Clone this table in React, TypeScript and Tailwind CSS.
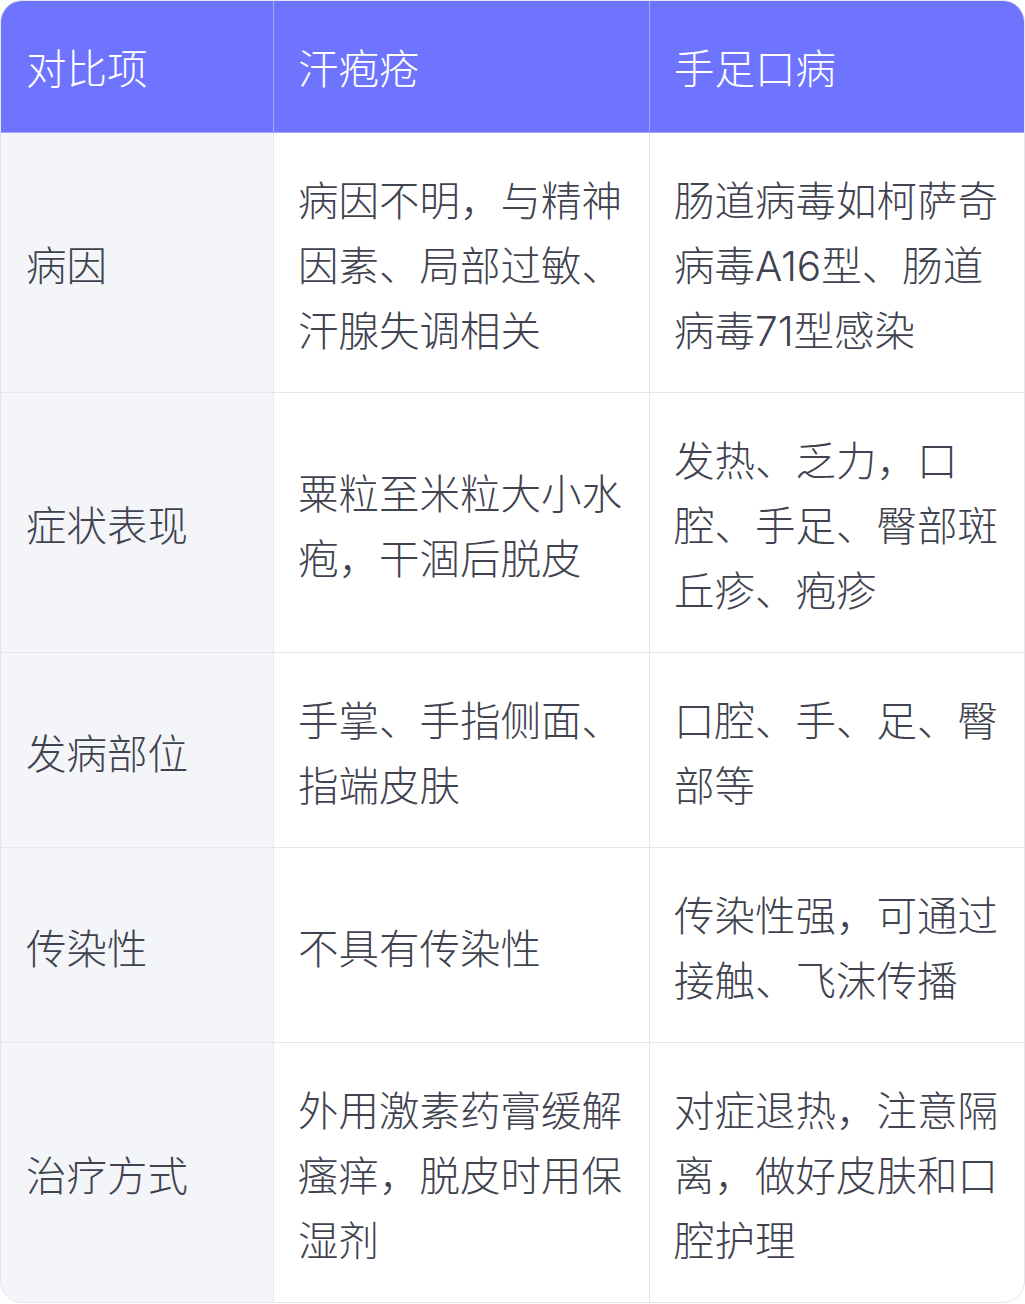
const headers = ["对比项", "汗疱疮", "手足口病"];

const rows: [string, string, string][] = [
  ["病因", "病因不明，与精神因素、局部过敏、汗腺失调相关", "肠道病毒如柯萨奇病毒A16型、肠道病毒71型感染"],
  ["症状表现", "粟粒至米粒大小水疱，干涸后脱皮", "发热、乏力，口腔、手足、臀部斑丘疹、疱疹"],
  ["发病部位", "手掌、手指侧面、指端皮肤", "口腔、手、足、臀部等"],
  ["传染性", "不具有传染性", "传染性强，可通过接触、飞沫传播"],
  ["治疗方式", "外用激素药膏缓解瘙痒，脱皮时用保湿剂", "对症退热，注意隔离，做好皮肤和口腔护理"],
];

export default function App() {
  return (
    <div className="min-h-screen bg-white">
      <div
        className="w-[1025px] overflow-hidden rounded-[22px] border border-[#e3e5ea] text-[40.5px] font-light leading-[65px]"
        style={{ fontFamily: 'Inter, "Noto Sans CJK SC", sans-serif' }}
      >
        <div className="grid grid-cols-[272px_376px_1fr] bg-[#6f74ff] text-white">
          {headers.map((h, i) => (
            <div
              key={h}
              className={`border-b border-[#a3a6ff] pb-[30px] pt-[36px] ${
                i === 0 ? "pl-[25px] pr-[24px]" : "border-l px-[24px]"
              }`}
            >
              {h}
            </div>
          ))}
        </div>
        {rows.map((row, r) => (
          <div
            key={row[0]}
            className={`grid grid-cols-[272px_376px_1fr] text-[#40434f] ${
              r < rows.length - 1 ? "border-b border-[#e6e7ec]" : ""
            }`}
          >
            <div className="flex items-center bg-[#f4f5f9] pb-[28px] pl-[25px] pr-[24px] pt-[36px]">
              {row[0]}
            </div>
            <div className="flex items-center border-l border-[#e6e7ec] px-[24px] pb-[28px] pt-[36px]">
              <span>{row[1]}</span>
            </div>
            <div className="flex items-center border-l border-[#e6e7ec] px-[24px] pb-[28px] pt-[36px]">
              <span>{row[2]}</span>
            </div>
          </div>
        ))}
      </div>
    </div>
  );
}
